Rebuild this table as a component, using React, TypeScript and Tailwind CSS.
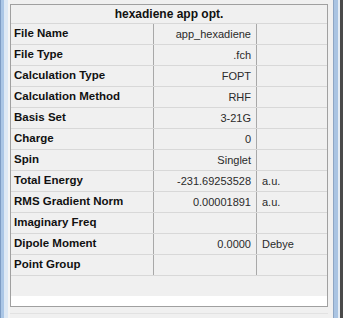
import React from "react";

type Row = { label: string; value?: string; unit?: string };

const rows: Row[] = [
  { label: "File Name", value: "app_hexadiene" },
  { label: "File Type", value: ".fch" },
  { label: "Calculation Type", value: "FOPT" },
  { label: "Calculation Method", value: "RHF" },
  { label: "Basis Set", value: "3-21G" },
  { label: "Charge", value: "0" },
  { label: "Spin", value: "Singlet" },
  { label: "Total Energy", value: "-231.69253528", unit: "a.u." },
  { label: "RMS Gradient Norm", value: "0.00001891", unit: "a.u." },
  { label: "Imaginary Freq" },
  { label: "Dipole Moment", value: "0.0000", unit: "Debye" },
  { label: "Point Group" },
];

const SummaryTable: React.FC = () => {
  return (
    <div className="flex flex-col w-[318px] h-[303px] border border-[#a0a0a0] bg-[#f0f0f0]">
      <div className="h-[19px] border-b border-[#d8d8d8] flex items-center justify-center text-[12px] font-bold text-[#111]">
        hexadiene app opt.
      </div>
      {rows.map(({ label, value, unit }) => (
        <div key={label} className="flex h-[21px] border-b border-[#d8d8d8]">
          <div className="w-[143px] border-r border-[#a8a8a8] pl-[3px] flex items-center text-[11.5px] font-bold text-[#111]">
            {label}
          </div>
          <div className="w-[103px] border-r border-[#a8a8a8] pr-[5px] flex items-center justify-end text-[11px] text-[#2a2a2a]">
            {value}
          </div>
          <div className="flex-1 pl-[5px] flex items-center text-[11px] text-[#2a2a2a]">{unit}</div>
        </div>
      ))}
      <div className="flex-1" />
      <div className="h-[10px] bg-white" />
    </div>
  );
};

export default function App() {
  return (
    <div
      className="flex w-[343px] h-[318px] bg-[#f0f0f0] overflow-hidden"
      style={{ fontFamily: '"Liberation Sans", Arial, sans-serif' }}
    >
      {/* left window frame */}
      <div className="w-[1px] bg-[#7d9cc4]" />
      <div className="w-[3px] bg-[#aac6e6]" />
      <div className="w-[4px] bg-[#dde8f4]" />
      <div className="w-[2px] bg-[#f4f4f4]" />

      <div className="flex flex-col pt-[4px]">
        <SummaryTable />
        <div className="mt-[6px] h-[1px] bg-[#e2e2e2]" />
      </div>

      {/* right window frame */}
      <div className="w-[5px] bg-[#f0f0f0]" />
      <div className="w-[1px] bg-[#8ea6c4]" />
      <div className="w-[4px] bg-[#aac4e2]" />
      <div className="w-[2px] bg-[#e4ecf4]" />
      <div className="flex-1 bg-[#4a4a4a]" />
    </div>
  );
}
